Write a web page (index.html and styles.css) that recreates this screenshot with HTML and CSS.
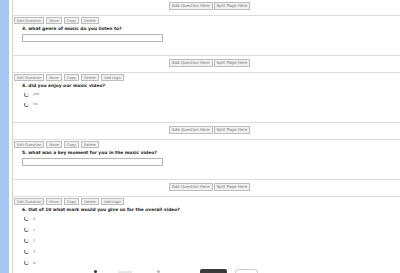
FILE: index.html
```html
<!DOCTYPE html>
<html lang="en">
<head>
  <meta charset="UTF-8" />
  <title>Survey Editor</title>
  <link rel="stylesheet" href="styles.css">
</head>
<body>
  <div class="rail"></div>
  <div class="main">

    <div class="insert">
      <button>Add Question Here</button>
      <button>Split Page Here</button>
    </div>

    <div class="question">
      <div class="tools">
        <button>Edit Question</button><button>Move</button><button>Copy</button><button>Delete</button>
      </div>
      <p class="title">3. what genre of music do you listen to?</p>
      <div class="field"></div>
    </div>

    <div class="insert">
      <button>Add Question Here</button>
      <button>Split Page Here</button>
    </div>

    <div class="question">
      <div class="tools">
        <button>Edit Question</button><button>Move</button><button>Copy</button><button>Delete</button><button>Add Logic</button>
      </div>
      <p class="title">4. did you enjoy our music video?</p>
      <div class="choice"><span class="radio"></span>yes</div>
      <div class="choice"><span class="radio"></span>no</div>
    </div>

    <div class="insert">
      <button>Add Question Here</button>
      <button>Split Page Here</button>
    </div>

    <div class="question">
      <div class="tools">
        <button>Edit Question</button><button>Move</button><button>Copy</button><button>Delete</button>
      </div>
      <p class="title">5. what was a key moment for you in the music video?</p>
      <div class="field"></div>
    </div>

    <div class="insert">
      <button>Add Question Here</button>
      <button>Split Page Here</button>
    </div>

    <div class="question">
      <div class="tools">
        <button>Edit Question</button><button>Move</button><button>Copy</button><button>Delete</button><button>Add Logic</button>
      </div>
      <p class="title">6. Out of 10 what mark would you give us for the overall video?</p>
      <div class="choice tall"><span class="radio"></span>0</div>
      <div class="choice tall"><span class="radio"></span>1</div>
      <div class="choice tall"><span class="radio"></span>2</div>
      <div class="choice tall"><span class="radio"></span>3</div>
      <div class="choice tall"><span class="radio"></span>4</div>
    </div>

  </div>

  <!-- player controls peeking in at the bottom -->
  <div class="controls">
    <span class="dot"></span>
    <span class="faint"></span>
    <span class="dot light"></span>
    <span class="block"></span>
    <span class="ring"></span>
  </div>
</body>
</html>
```

FILE: styles.css
```css
/* Base */
* { margin: 0; padding: 0; box-sizing: border-box; }
html, body { height: 100%; overflow: hidden; }
body {
  font-family: 'DejaVu Sans', Verdana, sans-serif;
  background: #fff;
  display: flex;
  gap: 3px;
}

.rail {
  width: 9px;
  flex-shrink: 0;
  background: #a7c7f3;
}

.main {
  flex: 1;
  border-left: 1px solid #d4d4d4;
  padding-top: 2px;
}

/* Insert bar between questions */
.insert {
  display: flex;
  justify-content: center;
  padding-left: 5px;
  margin-bottom: 5px;
}
.question + .insert { margin-top: 3px; }

button {
  font-family: inherit;
  font-size: 3.6px;
  color: #777;
  background: #f1f1f1;
  border: 1px solid #bdbdbd;
  height: 8px;
  padding: 0 2px;
  line-height: 6px;
}
.insert button { margin-left: 1px; font-size: 4px; }

/* Question block */
.question {
  border-top: 1px solid #dcdcdc;
  border-bottom: 1px solid #dcdcdc;
  padding: 1px 0 13px 1px;
}

.tools {
  display: flex;
  gap: 2px;
}
.tools button { height: 7px; }

.title {
  font-size: 4.4px;
  font-weight: bold;
  color: #222;
  line-height: 6px;
  margin: 2px 0 0 8px;
}

.field {
  width: 141px;
  height: 8px;
  margin: 2px 0 0 8px;
  border: 1px solid #b5b5b5;
  background: #fff;
}

.choice {
  display: flex;
  align-items: center;
  gap: 4px;
  height: 10px;
  margin-left: 10px;
  font-size: 3.6px;
  color: #777;
}
.choice:first-of-type { margin-top: 2px; }
.choice.tall { height: 11px; }

.radio {
  width: 5px;
  height: 5px;
  border-radius: 50%;
  border: 1px solid;
  border-color: #eee #e4e4e4 #666 #777;
}

/* Bottom overlay */
.controls {
  position: absolute;
  left: 94px;
  top: 268px;
  display: flex;
  align-items: flex-end;
  height: 5px;
}
.controls span { display: block; }
.dot { width: 3px; height: 3px; background: #333; border-radius: 50%; }
.dot.light { background: #bbb; margin-left: 25px; }
.faint { width: 14px; height: 2px; background: #e6e6e6; margin-left: 21px; }
.block { width: 27px; height: 4px; background: #3a3a3a; border-radius: 2px 2px 0 0; margin-left: 40px; }
.ring { width: 23px; height: 4px; border: 1px solid #ccc; border-bottom: none; border-radius: 10px 10px 0 0; margin-left: 8px; }
```
